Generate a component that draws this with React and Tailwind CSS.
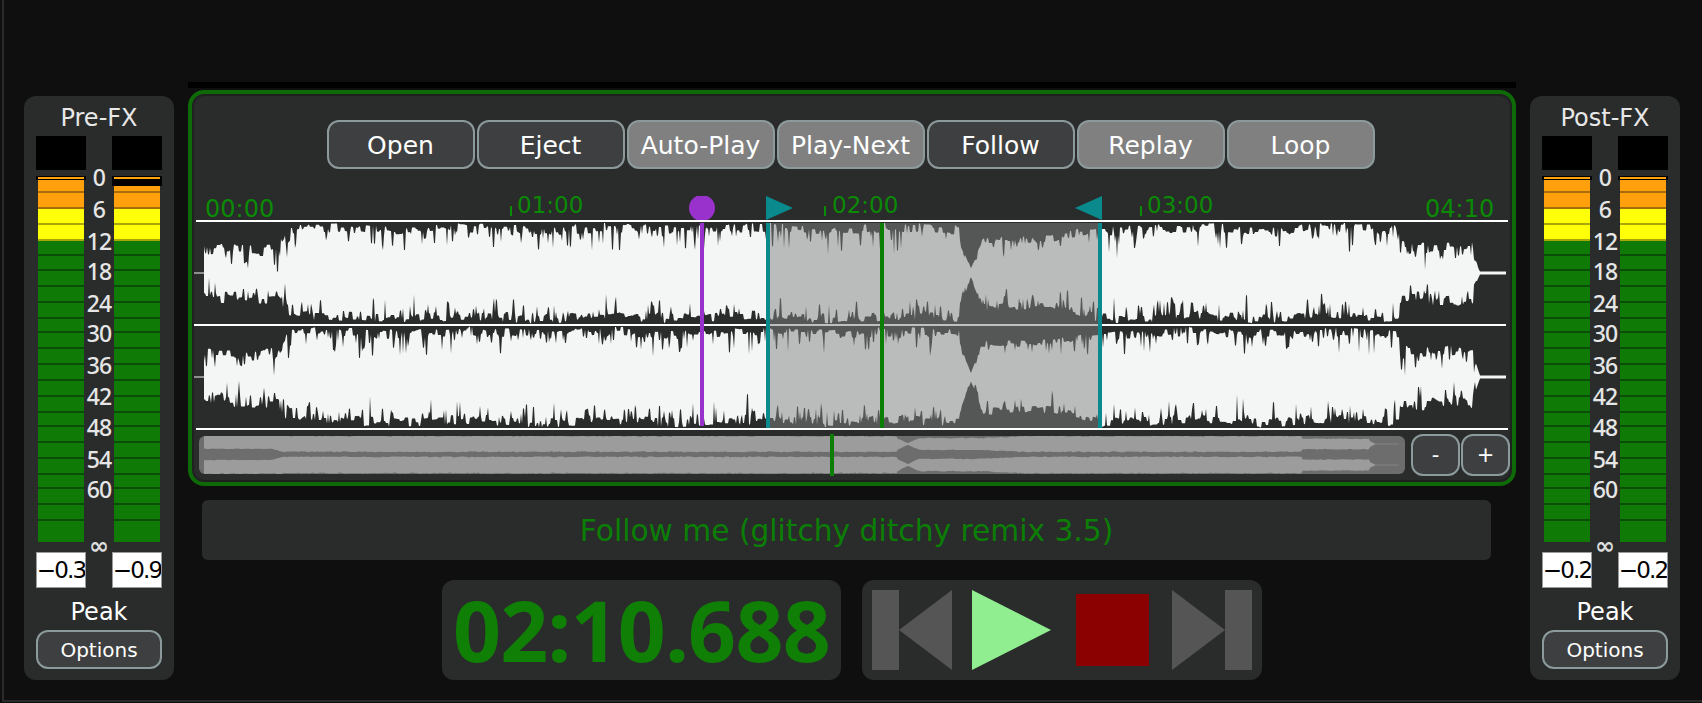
import React from "react";

function makeRng(seed) {
  let s = seed >>> 0;
  return () => {
    s = (s * 1664525 + 1013904223) >>> 0;
    return s / 4294967296;
  };
}

// page x -> nominal amplitude of the waveform
function envelope(x) {
  if (x < 204) return 0;
  if (x < 278) return 0.6;
  if (x < 290) return 0.6 + ((x - 278) / 12) * 0.38;
  if (x < 960) return 0.98;
  if (x < 982) return 0.1 + (Math.abs(x - 971) / 11) * 0.6;
  if (x < 1050) return 0.74;
  if (x < 1098) return 0.74 + ((x - 1050) / 48) * 0.24;
  if (x < 1400) return 0.98;
  if (x < 1474) return 0.66;
  if (x < 1480) return 0.03 + ((1480 - x) / 6) * 0.35;
  return 0.03;
}

function buildWave(seed, step, px0, scale, center, maxAmp, mini) {
  const rnd = makeRng(seed);
  const top = [];
  const bottom = [];
  const side = () => ({ run: 0, level: 0, spike: 0, depth: 0 });
  const advance = (s, rough) => {
    if (s.run <= 0) {
      s.run = 2 + Math.floor(rnd() * 3);
      s.level = 0.02 + rnd() * (mini ? 0.08 : rough ? 0.42 : 0.2);
    }
    if (s.spike <= 0 && rnd() < 0.16) {
      s.spike = 1 + Math.floor(rnd() * 2);
      s.depth = mini ? 0.05 : (rough ? 0.2 : 0.12) + rnd() * rnd() * (rough ? 0.5 : 0.42);
    }
    const v = 1 - s.level - (s.spike > 0 ? s.depth : 0);
    s.run -= 1;
    s.spike -= 1;
    return v;
  };
  const T = side();
  const B = side();
  for (let x = 204; x <= 1506; x += step) {
    const a = envelope(x);
    const rough = x < 290 || (x >= 1400 && x < 1476);
    const flat = a <= 0.04;
    const slow = mini ? 0 : 0.03 * Math.sin(x / 23);
    const ft = advance(T, rough) + slow;
    const fb = advance(B, rough) - slow;
    // in the overview, the outer edge of the intro stays at full height
    const outer = mini && x < 290 ? 1.04 : a;
    const ta = mini && center > 20 ? a : outer;
    const ba = mini && center < 20 ? a : outer;
    const t = flat ? a : Math.max(0.03, ta * ft);
    const b = flat ? a : Math.max(0.03, ba * fb);
    const px = (px0 + (x - 204) * scale).toFixed(1);
    top.push(`${px},${(center - t * maxAmp).toFixed(1)}`);
    bottom.unshift(`${px},${(center + b * maxAmp).toFixed(1)}`);
  }
  return [...top, ...bottom].join(" ");
}

const WAVE_1 = buildWave(11, 1, 10, 1, 51, 51, false);
const WAVE_2 = buildWave(37, 1, 10, 1, 51, 51, false);
const MINI_1 = buildWave(11, 1.5, 5, 1206 / 1314, 8, 8.6, true);
const MINI_2 = buildWave(37, 1.5, 5, 1206 / 1314, 29, 9, true);

function Channel({ points }) {
  return (
    <svg width="1314" height="102" viewBox="0 0 1314 102" className="block">
      <rect x="0" y="50" width="12" height="2" fill="#8f8f8f" />
      <rect x="1284" y="50" width="28" height="2" fill="#a8a8a8" />
      <polygon points={points} fill="#f4f6f6" />
    </svg>
  );
}

const GREEN_DIVIDERS = [193, 209, 225, 241, 256, 271, 287, 303, 319, 333, 349, 365, 381, 397, 413, 427, 443, 459, 475, 489, 505, 521];

function Meter({ peakHeight, value }) {
  const start = 176 + peakHeight;
  const edges = [start, ...GREEN_DIVIDERS.filter((d) => d > start), 542];
  const segments = edges.slice(0, -1).map((y, i) => ({ y, h: edges[i + 1] - y, last: i === edges.length - 2 }));
  return (
    <div className="flex w-[50px] flex-col items-center">
      <div className="h-[34px] w-[50px] bg-black" />
      <div className="h-[6px]" />
      <div className="flex w-[50px] flex-col bg-black px-[2px] py-[1px]" style={{ height: peakHeight }}>
        <div className="h-[2px] w-full bg-[#ffa50a]" />
      </div>
      <div className="flex w-[46px] flex-col">
        {segments.map((s) => {
          const colour =
            s.y < 209 ? "bg-[#ffa00c] border-[#a86c08]" : s.y < 241 ? "bg-[#ffff0a] border-[#a8a808]" : "bg-[#0f7b06] border-[#0a4d04]";
          return <div key={s.y} className={`${colour} ${s.last ? "" : "border-b-2"}`} style={{ height: s.h }} />;
        })}
      </div>
      <div className="mt-[10px] flex h-[36px] w-[50px] items-center justify-center overflow-hidden border border-[#9a9a9a] bg-white font-['DejaVu_Sans',sans-serif] text-[23px] tracking-[-1.8px] whitespace-nowrap text-black">
        {value}
      </div>
    </div>
  );
}

const SCALE = [
  ["0", 177],
  ["6", 209],
  ["12", 241],
  ["18", 271],
  ["24", 303],
  ["30", 333],
  ["36", 365],
  ["42", 396],
  ["48", 427],
  ["54", 459],
  ["60", 489],
];

function MeterPanel({ title, left, right }) {
  return (
    <div className="relative flex h-[584px] w-[150px] flex-col items-center rounded-[12px] bg-[#2a2c2c] pt-[40px] font-['DejaVu_Sans',sans-serif]">
      <div className="absolute top-[3px] left-0 w-full text-center text-[24px] leading-[39px] text-[#e8e8e8]">{title}</div>
      <div className="flex w-[126px] justify-between">
        <Meter peakHeight={left.peak} value={left.value} />
        <Meter peakHeight={right.peak} value={right.value} />
      </div>
      {SCALE.map(([t, y]) => (
        <div
          key={t}
          className="absolute left-[50px] w-[50px] -translate-y-1/2 text-center font-['Noto_Sans',sans-serif] text-[23px] leading-none font-medium tracking-[-0.8px] text-[#e6e6e6]"
          style={{ top: y - 96 }}
        >
          {t}
        </div>
      ))}
      <div className="absolute top-[438px] left-[50px] w-[50px] text-center font-['DejaVu_Sans',sans-serif] text-[24px] leading-[24px] font-bold text-[#dddddd]">∞</div>
      <div className="mt-[7px] text-[24px] leading-[34px] text-white">Peak</div>
      <button className="mt-[1px] h-[39px] w-[126px] rounded-[12px] border-2 border-[#8c9a9c] bg-[#3e3f40] pt-[1px] text-[20px] leading-none text-white">Options</button>
    </div>
  );
}

const BUTTONS = [
  ["Open", false],
  ["Eject", false],
  ["Auto-Play", true],
  ["Play-Next", true],
  ["Follow", false],
  ["Replay", true],
  ["Loop", true],
];

const TICKS = [
  ["01:00", 316, 323],
  ["02:00", 630, 638],
  ["03:00", 946, 953],
];

function Waveform() {
  return (
    <div className="relative ml-[2px] w-[1314px]">
      {/* time ruler */}
      <div className="relative h-[26px] font-['DejaVu_Sans',sans-serif] text-[24px] leading-[24px] text-[#0b8a05]">
        <span className="absolute top-[3px] left-[11px]">00:00</span>
        <span className="absolute top-[3px] left-[1231px]">04:10</span>
        {TICKS.map(([t, tick, label]) => (
          <React.Fragment key={t}>
            <span className="absolute top-[12px] h-[10px] w-[2px] bg-[#0b8a05]" style={{ left: tick }} />
            <span className="absolute top-[-1px] text-[23px]" style={{ left: label }}>
              {t}
            </span>
          </React.Fragment>
        ))}
      </div>
      <div className="ml-[2px] h-[2px] bg-white" />
      <Channel points={WAVE_1} />
      <div className="mr-[2px] h-[2px] bg-white" />
      <Channel points={WAVE_2} />
      <div className="ml-[2px] h-[2px] bg-white" />

      {/* selection and markers */}
      <div className="absolute top-[29px] left-[572px] h-[205px] w-[336px] bg-[rgba(128,128,128,0.5)]" />
      <div className="absolute top-[29px] left-[506px] h-[203px] w-[4px] bg-[#9932cc]" />
      <div className="absolute top-[2px] left-[495px] h-[24px] w-[26px] overflow-hidden">
        <div className="absolute top-[-1px] left-0 h-[26px] w-[26px] rounded-full bg-[#9932cc]" />
      </div>
      <div className="absolute top-[29px] left-[572px] h-[205px] w-[4px] bg-[#0a8a8c]" />
      <div className="absolute top-[29px] left-[904px] h-[205px] w-[4px] bg-[#0a8a8c]" />
      <div className="absolute top-[29px] left-[686px] h-[205px] w-[4px] bg-[#0b7f05]" />
      <svg width="27" height="24" viewBox="0 0 27 24" className="absolute top-[2px] left-[572px]">
        <polygon points="0,0 27,12 0,24" fill="#0a8a8c" />
      </svg>
      <svg width="27" height="24" viewBox="0 0 27 24" className="absolute top-[2px] left-[881px]">
        <polygon points="27,0 0,12 27,24" fill="#0a8a8c" />
      </svg>
    </div>
  );
}

function Overview() {
  return (
    <div className="relative mt-[4px] ml-[7px] flex h-[42px] w-[1206px] items-center">
      <div className="h-[38px] w-full overflow-hidden rounded-[6px] bg-[#6d6d6d]">
        <svg width="1206" height="38" viewBox="0 0 1206 38" className="block">
          <polygon points={MINI_1} fill="#9c9c9c" />
          <polygon points={MINI_2} fill="#9c9c9c" />
        </svg>
      </div>
      <div className="absolute top-0 left-[631px] h-[42px] w-[4px] bg-[#0b7f05]" />
    </div>
  );
}

function ZoomButton({ children }) {
  return (
    <button className="h-[42px] w-[49px] rounded-[12px] border-2 border-[#8c9a9c] bg-[#3e3f40] font-['DejaVu_Sans',sans-serif] text-[21px] leading-none text-white">
      {children}
    </button>
  );
}

export default function App() {
  return (
    <div className="h-[703px] w-[1702px] overflow-hidden bg-[#0f0f0f] pl-[2px]">
      <div className="flex h-[702px] border-b-2 border-l-2 border-[#2a2a2a] pl-[20px]">
        <div className="mt-[96px]">
          <MeterPanel title="Pre-FX" left={{ peak: 4, value: "−0.3" }} right={{ peak: 10, value: "−0.9" }} />
        </div>

        <div className="ml-[14px] flex w-[1328px] flex-col">
          <div className="mt-[82px] h-[6px] bg-black" />
          <div className="mt-[2px] flex h-[396px] flex-col rounded-[16px] border-4 border-[#0e6a06] bg-[#2a2c2c] shadow-[inset_0_0_0_2px_#1f2020]">
            <div className="mt-[26px] flex h-[49px] justify-center gap-[2px] pr-[3px] font-['DejaVu_Sans',sans-serif] text-[25px] text-white">
              {BUTTONS.map(([label, lit]) => (
                <button
                  key={label}
                  className={`w-[148px] rounded-[12px] border-2 border-[#8c9a9c] pt-[2px] ${lit ? "bg-[#808080]" : "bg-[#3e3f40]"}`}
                >
                  {label}
                </button>
              ))}
            </div>
            <div className="mt-[25px]">
              <Waveform />
            </div>
            <div className="flex items-start">
              <Overview />
              <div className="mt-[4px] ml-[6px] flex gap-px">
                <ZoomButton>-</ZoomButton>
                <ZoomButton>+</ZoomButton>
              </div>
            </div>
          </div>

          <div className="mt-[14px] mr-[25px] ml-[14px] flex h-[60px] items-center justify-center rounded-[6px] bg-[#2a2c2c] pt-[2px] font-['DejaVu_Sans',sans-serif] text-[29.7px] text-[#0b7f05]">
            Follow me (glitchy ditchy remix 3.5)
          </div>

          <div className="mt-[20px] flex justify-center gap-[21px]">
            <div className="flex h-[100px] w-[399px] items-center justify-center rounded-[12px] bg-[#2a2c2c] font-['Noto_Sans',sans-serif] text-[84px] leading-none font-bold tracking-[-0.7px] text-[#0f7f05]">
              02:10.688
            </div>
            <div className="flex h-[100px] w-[400px] items-center justify-center rounded-[12px] bg-[#2a2c2c]">
              <svg width="380" height="80" viewBox="0 0 380 80" className="block">
                <rect x="0" y="0" width="27" height="80" fill="#555555" />
                <polygon points="80,0 80,80 27,40" fill="#555555" />
                <polygon points="100,0 179,40 100,80" fill="#90ee90" />
                <rect x="204" y="4" width="73" height="72" fill="#8b0000" />
                <polygon points="300,0 353,40 300,80" fill="#555555" />
                <rect x="353" y="0" width="27" height="80" fill="#555555" />
              </svg>
            </div>
          </div>
        </div>

        <div className="mt-[96px] ml-[14px]">
          <MeterPanel title="Post-FX" left={{ peak: 4, value: "−0.2" }} right={{ peak: 4, value: "−0.2" }} />
        </div>
      </div>
    </div>
  );
}
